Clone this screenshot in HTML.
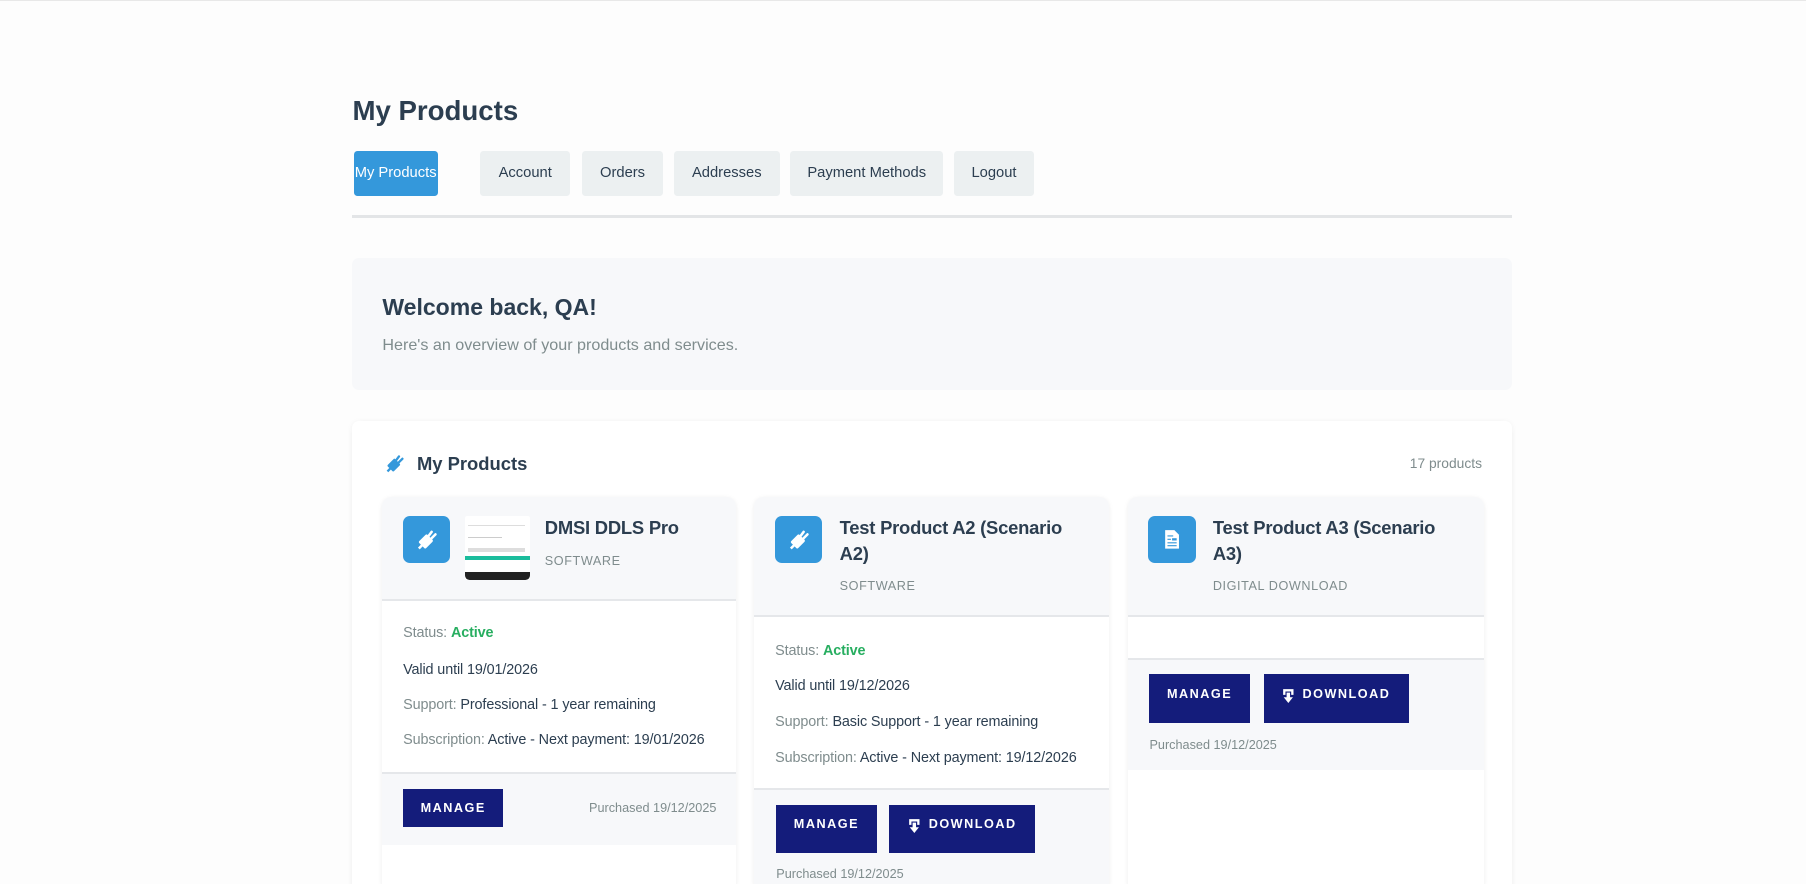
<!DOCTYPE html>
<html><head><meta charset="utf-8"><style>
*{box-sizing:border-box;margin:0;padding:0}
html,body{width:1806px;height:884px;overflow:hidden;background:#fdfdfd}
body{font-family:"Liberation Sans",Arial,sans-serif;color:#2c3e50}
#z{zoom:1.1518;position:relative;width:1568px;height:768px;border-top:1px solid #e8e8e8}
.a{position:absolute}
h1{position:absolute;left:306px;top:82px;font-size:24px;font-weight:bold;color:#2c3e50}
.tab{position:absolute;top:130px;height:39px;background:#ecf0f1;border-radius:3px;font-size:12.8px;color:#2c3e50;display:flex;align-items:center;justify-content:center;white-space:nowrap}
.tab.on{background:#3498db;color:#fff}
.card{position:absolute;top:431px;width:307px;height:337px;background:#fff;border-radius:8px 8px 0 0;box-shadow:0 1px 4px rgba(0,0,0,.07);overflow:hidden}
.hd{position:absolute;left:0;top:0;width:100%;background:#f7f8fa;border-bottom:2px solid #e5e7ea}
.ft{position:absolute;left:0;width:100%;background:#f7f8fa;border-top:2px solid #e5e7ea}
.ic{position:absolute;left:18px;top:16px;width:41px;height:41px;background:#3498db;border-radius:6px;display:flex;align-items:center;justify-content:center}
.tt{position:absolute;font-size:16px;font-weight:bold;line-height:23px;color:#2c3e50;letter-spacing:-.2px}
.ty{position:absolute;font-size:11px;color:#7f8c8d;letter-spacing:.5px}
.ln{position:absolute;left:18px;font-size:12.5px;color:#2c3e50;white-space:nowrap;letter-spacing:-.1px}
.ln .l{color:#7f8c8d}
.ok{color:#27ae60;font-weight:bold}
.btn{position:absolute;background:#141c7b;color:#fff;font-size:11px;font-weight:bold;letter-spacing:1.3px;display:flex;justify-content:center}
.pu{position:absolute;font-size:11px;color:#7f8c8d}
</style></head><body><div id="z">
<h1>My Products</h1>
<div class="tab on" style="left:307px;width:73px">My Products</div>
<div class="tab" style="left:417px;width:78px">Account</div>
<div class="tab" style="left:505px;width:71px">Orders</div>
<div class="tab" style="left:585px;width:92px">Addresses</div>
<div class="tab" style="left:686px;width:133px">Payment Methods</div>
<div class="tab" style="left:828px;width:70px">Logout</div>
<div class="a" style="left:306px;top:186px;width:1007px;height:2px;background:#e3e5e7"></div>
<div class="a" style="left:306px;top:223px;width:1007px;height:115px;background:#f7f8fa;border-radius:6px">
<div class="a" style="left:26px;top:31px;font-size:20px;font-weight:bold">Welcome back, QA!</div>
<div class="a" style="left:26px;top:68px;font-size:14px;color:#7f8c8d">Here's an overview of your products and services.</div>
</div>
<div class="a" style="left:306px;top:365px;width:1007px;height:420px;background:#fff;border-radius:6px;box-shadow:0 1px 5px rgba(0,0,0,.06)"></div>
<svg class="a" style="left:333px;top:392px" width="18" height="18" viewBox="0 0 18 18"><path d="M3 16 L6 13 L4 11 L9 6 L13 10 L8 15 L6 13" fill="#3498db" stroke="#3498db" stroke-width="2" stroke-linejoin="round"/><path d="M10 7 L13 3 M12 9 L16 5" stroke="#3498db" stroke-width="2" stroke-linecap="round"/></svg>
<div class="a" style="left:362px;top:392px;font-size:16px;font-weight:bold">My Products</div>
<div class="a" style="left:1224px;top:394px;font-size:12px;color:#7f8c8d">17 products</div>

<div class="card" style="left:332px">
<div class="hd" style="height:90px">
<div class="ic"><svg width="20" height="20" viewBox="0 0 18 18"><path d="M3 16 L6 13 L4 11 L9 6 L13 10 L8 15 L6 13" fill="#fff" stroke="#fff" stroke-width="2" stroke-linejoin="round"/><path d="M10 7 L13 3 M12 9 L16 5" stroke="#fff" stroke-width="2" stroke-linecap="round"/></svg></div>
<div class="a" style="left:72px;top:16px;width:56px;height:56px;background:#fff;border-radius:2px;overflow:hidden">
<div class="a" style="left:2px;top:8px;width:50px;height:1px;background:#ddd"></div>
<div class="a" style="left:2px;top:18px;width:30px;height:1px;background:#ccc"></div>
<div class="a" style="left:2px;top:28px;width:50px;height:3px;background:#ddd"></div>
<div class="a" style="left:0;top:35px;width:56px;height:3px;background:#1abc9c"></div>
<div class="a" style="left:0;top:49px;width:56px;height:7px;background:#222;border-radius:0 0 4px 4px"></div>
</div>
<div class="tt" style="left:141px;top:15px">DMSI DDLS Pro</div>
<div class="ty" style="left:141px;top:49px">SOFTWARE</div>
</div>
<div class="ln" style="top:111px"><span class="l">Status:</span> <span class="ok">Active</span></div>
<div class="ln" style="top:143px">Valid until 19/01/2026</div>
<div class="ln" style="top:173px"><span class="l">Support:</span> Professional - 1 year remaining</div>
<div class="ln" style="top:204px"><span class="l">Subscription:</span> Active - Next payment: 19/01/2026</div>
<div class="ft" style="top:238px;height:64px">
<div class="btn" style="left:18px;top:13px;width:87px;height:33px;align-items:center">MANAGE</div>
<div class="pu" style="right:17px;top:24px">Purchased 19/12/2025</div>
</div>
</div>

<div class="card" style="left:655px;width:308px">
<div class="hd" style="height:104px">
<div class="ic"><svg width="20" height="20" viewBox="0 0 18 18"><path d="M3 16 L6 13 L4 11 L9 6 L13 10 L8 15 L6 13" fill="#fff" stroke="#fff" stroke-width="2" stroke-linejoin="round"/><path d="M10 7 L13 3 M12 9 L16 5" stroke="#fff" stroke-width="2" stroke-linecap="round"/></svg></div>
<div class="tt" style="left:74px;top:15px;width:215px">Test Product A2 (Scenario A2)</div>
<div class="ty" style="left:74px;top:71px">SOFTWARE</div>
</div>
<div class="ln" style="top:126px"><span class="l">Status:</span> <span class="ok">Active</span></div>
<div class="ln" style="top:157px">Valid until 19/12/2026</div>
<div class="ln" style="top:188px"><span class="l">Support:</span> Basic Support - 1 year remaining</div>
<div class="ln" style="top:219px"><span class="l">Subscription:</span> Active - Next payment: 19/12/2026</div>
<div class="ft" style="top:252px;height:90px">
<div class="btn" style="left:19px;top:13px;width:87px;height:42px;padding-top:11px">MANAGE</div>
<div class="btn" style="left:117px;top:13px;width:127px;height:42px;padding-top:11px"><svg width="11" height="14" viewBox="0 0 11 14" style="margin-right:7px;margin-top:1px"><path d="M1 6 V1 H10 V6 H8 V3 H3 V6 Z" fill="#fff"/><path d="M4 4 H7 V8 H9.5 L5.5 13 L1.5 8 H4 Z" fill="#fff"/></svg>DOWNLOAD</div>
<div class="pu" style="left:19px;top:67px">Purchased 19/12/2025</div>
</div>
</div>

<div class="card" style="left:979px;width:309px">
<div class="hd" style="height:104px">
<div class="ic"><svg width="14" height="18" viewBox="0 0 14 18"><path d="M1 1 H9 L13 5 V17 H1 Z" fill="#fff"/><path d="M3 6 H8 M3 9 H6 M3 12 H11 M3 14.5 H11" stroke="#3498db" stroke-width="1"/><rect x="7" y="8" width="4" height="2" fill="#3498db"/></svg></div>
<div class="tt" style="left:74px;top:15px;width:215px">Test Product A3 (Scenario A3)</div>
<div class="ty" style="left:74px;top:71px">DIGITAL DOWNLOAD</div>
</div>
<div class="ft" style="top:139px;height:98px">
<div class="btn" style="left:19px;top:13px;width:87px;height:42px;padding-top:11px">MANAGE</div>
<div class="btn" style="left:118px;top:13px;width:126px;height:42px;padding-top:11px"><svg width="11" height="14" viewBox="0 0 11 14" style="margin-right:7px;margin-top:1px"><path d="M1 6 V1 H10 V6 H8 V3 H3 V6 Z" fill="#fff"/><path d="M4 4 H7 V8 H9.5 L5.5 13 L1.5 8 H4 Z" fill="#fff"/></svg>DOWNLOAD</div>
<div class="pu" style="left:19px;top:68px">Purchased 19/12/2025</div>
</div>
</div>
</div></body></html>
